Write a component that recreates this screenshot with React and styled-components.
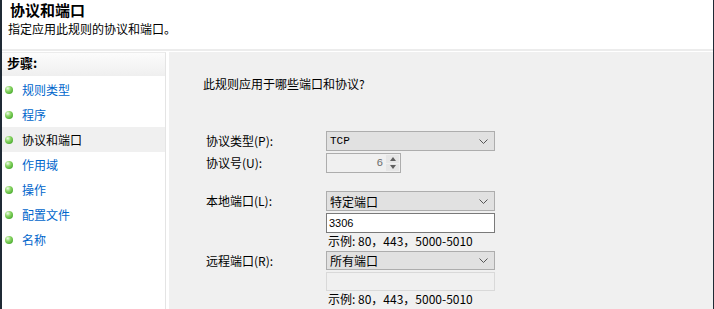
import React from 'react'
import styled, { createGlobalStyle } from 'styled-components'

const GlobalStyle = createGlobalStyle`
  html, body { margin: 0; padding: 0; background: #ffffff; }
  body {
    font-family: "Noto Sans CJK SC", "Liberation Sans", sans-serif;
    font-size: 12px;
    color: #000;
  }
`

const Window = styled.div`
  width: 714px;
  height: 309px;
  box-sizing: border-box;
  border-left: 2px solid #1f2a35;
  border-right: 1px solid #1f2a35;
  display: flex;
  flex-direction: column;
  background: #ffffff;
  overflow: hidden;
`

const Header = styled.div`
  height: 49px;
  padding-left: 8px;
  display: flex;
  flex-direction: column;
  flex-shrink: 0;
`

const Title = styled.div`
  font-size: 15px;
  font-weight: bold;
  line-height: 20px;
`

const Subtitle = styled.div`
  font-size: 12px;
  line-height: 16px;
  margin-top: 1px;
  margin-left: -2px;
`

const Divider = styled.div`
  height: 2px;
  background: #ececec;
  flex-shrink: 0;
`

const Body = styled.div`
  flex: 1;
  display: flex;
  gap: 3px;
  padding-top: 1px;
  background: #ffffff;
`

const Sidebar = styled.div`
  width: 163px;
  border-right: 1px solid #e4e4e4;
  border-top: 1px solid #ececec;
  display: flex;
  flex-direction: column;
  flex-shrink: 0;
`

const SideHeader = styled.div`
  height: 23px;
  background: linear-gradient(#fcfcfc, #efefef);
  font-weight: bold;
  font-size: 13px;
  line-height: 20px;
  padding-left: 5px;
`

const NavList = styled.div`
  margin-top: 1px;
  display: flex;
  flex-direction: column;
`

const NavItem = styled.div`
  height: 25px;
  display: flex;
  align-items: center;
  gap: 9px;
  padding-left: 3px;
  color: ${p => (p.$active ? '#000000' : '#0066cc')};
  background: ${p => (p.$active ? '#f0f0f0' : 'transparent')};
  font-size: 12px;
`

const Dot = styled.span`
  width: 8px;
  height: 8px;
  border-radius: 50%;
  background: radial-gradient(circle at 35% 30%, #f2fbee 0, #8fd86a 35%, #3ea524 85%);
`

const Content = styled.div`
  flex: 1;
  background: #f0f0f0;
  padding: 24px 0 0 34px;
  display: flex;
  flex-direction: column;
`

const Question = styled.div`
  line-height: 16px;
`

const Group = styled.div`
  display: flex;
  flex-direction: column;
  margin-top: ${p => p.$top}px;
  margin-left: 3px;
  gap: 2px;
`

const Row = styled.div`
  display: flex;
  align-items: flex-start;
`

const Label = styled.div`
  width: 120px;
  line-height: 20px;
  height: 20px;
`

const Stack = styled.div`
  display: flex;
  flex-direction: column;
  gap: 2px;
`

const Select = styled.div`
  width: 169px;
  height: ${p => p.$h || 20}px;
  box-sizing: border-box;
  border: 1px solid #adadad;
  background: #e1e1e1;
  display: flex;
  align-items: center;
  justify-content: space-between;
  padding: 0 6px 0 3px;
  font-family: ${p => (p.$mono ? '"Liberation Mono", monospace' : 'inherit')};
  font-size: ${p => (p.$mono ? '11px' : '12px')};
`

const Input = styled.div`
  width: 169px;
  height: ${p => p.$h || 20}px;
  box-sizing: border-box;
  border: 1px solid ${p => (p.$disabled ? '#d9d9d9' : '#7a7a7a')};
  background: ${p => (p.$disabled ? '#f0f0f0' : '#ffffff')};
  display: flex;
  align-items: center;
  padding-left: 2px;
  font-family: "Liberation Sans", sans-serif;
  font-size: 11px;
`

const Spinner = styled.div`
  width: 75px;
  height: 20px;
  box-sizing: border-box;
  border: 1px solid #adadad;
  background: #f0f0f0;
  display: flex;
  align-items: stretch;
  justify-content: flex-end;
  color: #6d6d6d;
  font-family: "Liberation Mono", monospace;
  font-size: 11px;
`

const SpinValue = styled.div`
  display: flex;
  align-items: center;
  padding-right: 3px;
`

const SpinButtons = styled.div`
  width: 13px;
  display: flex;
  flex-direction: column;
  margin: 1px 1px 1px 0;
  gap: 1px;
`

const SpinButton = styled.div`
  flex: 1;
  background: #e6e6e6;
  display: flex;
  align-items: center;
  justify-content: center;
`

const Example = styled.div`
  line-height: 16px;
  height: 16px;
  margin-top: -2px;
  margin-left: 2px;
  font-size: 12px;
  white-space: pre;
`

const Chevron = () => (
  <svg width="9" height="5" viewBox="0 0 9 5">
    <polyline points="0.5,0.5 4.5,4.5 8.5,0.5" fill="none" stroke="#555" strokeWidth="1" />
  </svg>
)

const Tri = ({ up }) => (
  <svg width="6" height="4" viewBox="0 0 6 4">
    <polygon points={up ? '0,4 3,0 6,4' : '0,0 6,0 3,4'} fill="#606060" />
  </svg>
)

const steps = ['规则类型', '程序', '协议和端口', '作用域', '操作', '配置文件', '名称']
const example = '示例: 80，443，5000-5010'

export default function App() {
  return (
    <>
      <GlobalStyle />
      <Window>
        <Header>
          <Title>协议和端口</Title>
          <Subtitle>指定应用此规则的协议和端口。</Subtitle>
        </Header>
        <Divider />
        <Body>
          <Sidebar>
            <SideHeader>步骤:</SideHeader>
            <NavList>
              {steps.map(s => (
                <NavItem key={s} $active={s === '协议和端口'}>
                  <Dot />
                  {s}
                </NavItem>
              ))}
            </NavList>
          </Sidebar>
          <Content>
            <Question>此规则应用于哪些端口和协议?</Question>
            <Group $top={39}>
              <Row>
                <Label>协议类型(P):</Label>
                <Select $mono>TCP<Chevron /></Select>
              </Row>
              <Row>
                <Label>协议号(U):</Label>
                <Spinner>
                  <SpinValue>6</SpinValue>
                  <SpinButtons>
                    <SpinButton><Tri up /></SpinButton>
                    <SpinButton><Tri /></SpinButton>
                  </SpinButtons>
                </Spinner>
              </Row>
            </Group>
            <Group $top={18}>
              <Row>
                <Label>本地端口(L):</Label>
                <Stack>
                  <Select>特定端口<Chevron /></Select>
                  <Input>3306</Input>
                  <Example>{example}</Example>
                </Stack>
              </Row>
              <Row>
                <Label>远程端口(R):</Label>
                <Stack>
                  <Select $h={19}>所有端口<Chevron /></Select>
                  <Input $disabled $h={19} />
                  <Example>{example}</Example>
                </Stack>
              </Row>
            </Group>
          </Content>
        </Body>
      </Window>
    </>
  )
}
